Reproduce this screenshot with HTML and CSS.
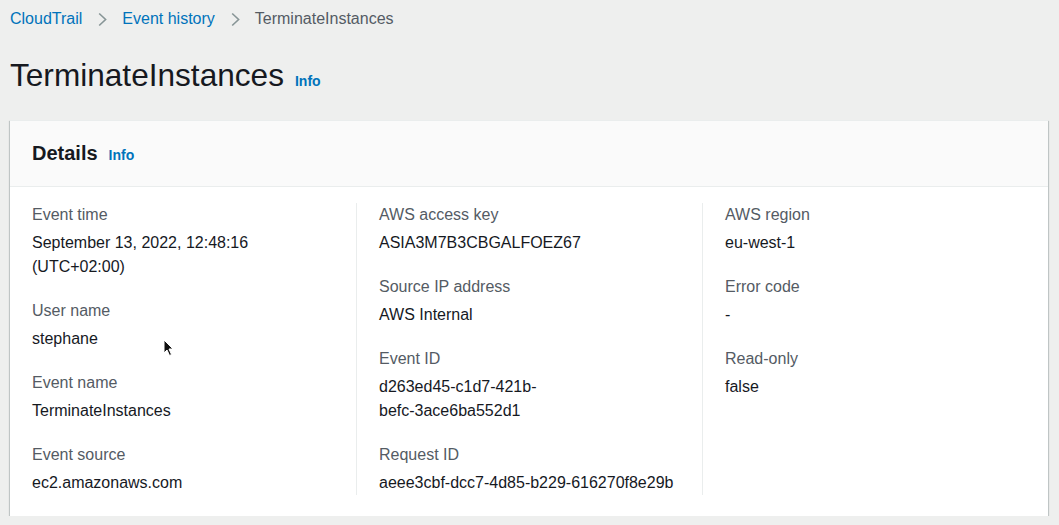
FILE: index.html
```html
<!DOCTYPE html>
<html lang="en">
<head>
<meta charset="utf-8">
<title>TerminateInstances</title>
<link rel="stylesheet" href="styles.css">
</head>
<body>
<div class="page">
  <nav class="crumbs">
    <a class="crumb-link" href="#">CloudTrail</a>
    <svg class="chev" width="9" height="15" viewBox="0 0 9 15"><polyline points="1.2,1.5 7.6,7.5 1.2,13.5" fill="none" stroke="#879596" stroke-width="1.6"/></svg>
    <a class="crumb-link" href="#">Event history</a>
    <svg class="chev" width="9" height="15" viewBox="0 0 9 15"><polyline points="1.2,1.5 7.6,7.5 1.2,13.5" fill="none" stroke="#879596" stroke-width="1.6"/></svg>
    <span class="crumb-current">TerminateInstances</span>
  </nav>

  <h1 class="title">TerminateInstances<a class="info" href="#">Info</a></h1>

  <section class="card">
    <header class="card-head">
      <h2 class="card-title">Details<a class="info" href="#">Info</a></h2>
    </header>
    <div class="card-body">
      <div class="col">
        <div class="item">
          <div class="label">Event time</div>
          <div class="value">September 13, 2022, 12:48:16<br>(UTC+02:00)</div>
        </div>
        <div class="item">
          <div class="label">User name</div>
          <div class="value">stephane</div>
        </div>
        <div class="item">
          <div class="label">Event name</div>
          <div class="value">TerminateInstances</div>
        </div>
        <div class="item">
          <div class="label">Event source</div>
          <div class="value">ec2.amazonaws.com</div>
        </div>
      </div>
      <div class="col">
        <div class="item">
          <div class="label">AWS access key</div>
          <div class="value">ASIA3M7B3CBGALFOEZ67</div>
        </div>
        <div class="item">
          <div class="label">Source IP address</div>
          <div class="value">AWS Internal</div>
        </div>
        <div class="item">
          <div class="label">Event ID</div>
          <div class="value">d263ed45-c1d7-421b-<br>befc-3ace6ba552d1</div>
        </div>
        <div class="item">
          <div class="label">Request ID</div>
          <div class="value">aeee3cbf-dcc7-4d85-b229-616270f8e29b</div>
        </div>
      </div>
      <div class="col">
        <div class="item">
          <div class="label">AWS region</div>
          <div class="value">eu-west-1</div>
        </div>
        <div class="item">
          <div class="label">Error code</div>
          <div class="value">-</div>
        </div>
        <div class="item">
          <div class="label">Read-only</div>
          <div class="value">false</div>
        </div>
      </div>
    </div>
  </section>

  <svg class="cursor" width="12" height="18" viewBox="0 0 12 18"><path d="M1 1 L1 14 L4 11 L6.5 16.5 L8.5 15.5 L6 10 L10 10 Z" fill="#111" stroke="#fff" stroke-width="1"/></svg>
</div>
</body>
</html>
```

FILE: styles.css
```css
html, body {
  margin: 0;
  padding: 0;
  background: #eeefee;
}

body {
  font-family: "Liberation Sans", Arial, sans-serif;
  color: #16191f;
  font-size: 16px;
}

.page {
  position: relative;
  padding: 8px 11px 0 10px;
}

.crumbs {
  display: flex;
  align-items: center;
  height: 22px;
  line-height: 22px;
  font-size: 16px;
}

.crumb-link {
  color: #0073bb;
  text-decoration: none;
}

.chev {
  display: block;
  margin: 0 15px 0 16px;
}

.crumb-current {
  color: #545b64;
}

.title {
  margin: 25px 0 0 0;
  font-size: 31.6px;
  line-height: 40px;
  font-weight: 400;
  color: #16191f;
}

.info {
  margin-left: 11px;
  font-size: 14px;
  line-height: 1;
  font-weight: 700;
  color: #0073bb;
  text-decoration: none;
}

.card {
  margin-top: 25px;
  background: #fff;
  border-top: 1px solid #eaeded;
  box-shadow: 0 1px 1px 0 rgba(0, 28, 36, 0.3), 1px 1px 1px 0 rgba(0, 28, 36, 0.15), -1px 1px 1px 0 rgba(0, 28, 36, 0.15);
}

.card-head {
  background: #fafafa;
  padding: 18px 22px 19px 22px;
  border-bottom: 1px solid #eaeded;
}

.card-title {
  margin: 0;
  font-size: 20px;
  line-height: 28px;
  font-weight: 700;
  color: #16191f;
}

.card-body {
  display: grid;
  grid-template-columns: repeat(3, 1fr);
  padding: 16px 0 21px 0;
}

.col {
  display: flex;
  flex-direction: column;
  gap: 20px;
  padding: 0 20px 0 22px;
}

.col + .col {
  border-left: 1px solid #eaeded;
  padding-left: 22px;
}

.item {
  display: flex;
  flex-direction: column;
  gap: 4px;
  line-height: 24px;
}

.label {
  color: #545b64;
}

.value {
  color: #16191f;
}

.cursor {
  position: absolute;
  left: 163px;
  top: 339px;
}
```
